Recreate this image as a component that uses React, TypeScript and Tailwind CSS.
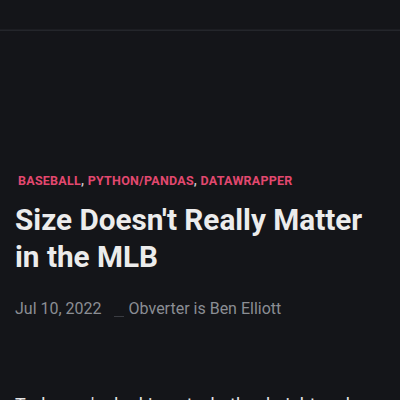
const tags = ["Baseball", "Python/Pandas", "Datawrapper"];

const App = () => {
    return (
        <div
            className="w-[400px] h-[400px] overflow-hidden bg-[#141519] text-[#ececec]"
            style={{ fontFamily: "Roboto, 'Liberation Sans', sans-serif" }}
        >
            <header className="h-[31px] border-b border-[#24262b] shadow-[0_-5px_0_-4px_#1c1d22_inset]" />
            <article className="px-[15px] pt-[142px]">
                <div className="pl-[3px] text-[12.5px] font-bold uppercase tracking-[0.02em] leading-4">
                    {tags.map((tag, i) => (
                        <span key={tag}>
                            <a href="#" className="text-[#e2486f]">
                                {tag}
                            </a>
                            {i < tags.length - 1 && <span className="text-[#c9cad0]">, </span>}
                        </span>
                    ))}
                </div>
                <h1 className="mt-[12px] text-[29.7px] font-bold leading-[37px] text-[#ececec]">
                    Size Doesn't Really Matter in the MLB
                </h1>
                <div className="mt-[22px] flex items-center text-[16px] text-[#8b8e94]">
                    <span>Jul 10, 2022</span>
                    <span className="ml-[12px] mr-[5px] mt-[14px] h-[1px] w-[10px] bg-[#3a3c42]" />
                    <span>Obverter is Ben Elliott</span>
                </div>
                <p className="mt-[70px] text-[18px] leading-7 text-[#e4e4e4]">
                    Today we're looking at whether height and weight really matter for hitters in baseball.
                </p>
            </article>
        </div>
    );
};

export default App;
